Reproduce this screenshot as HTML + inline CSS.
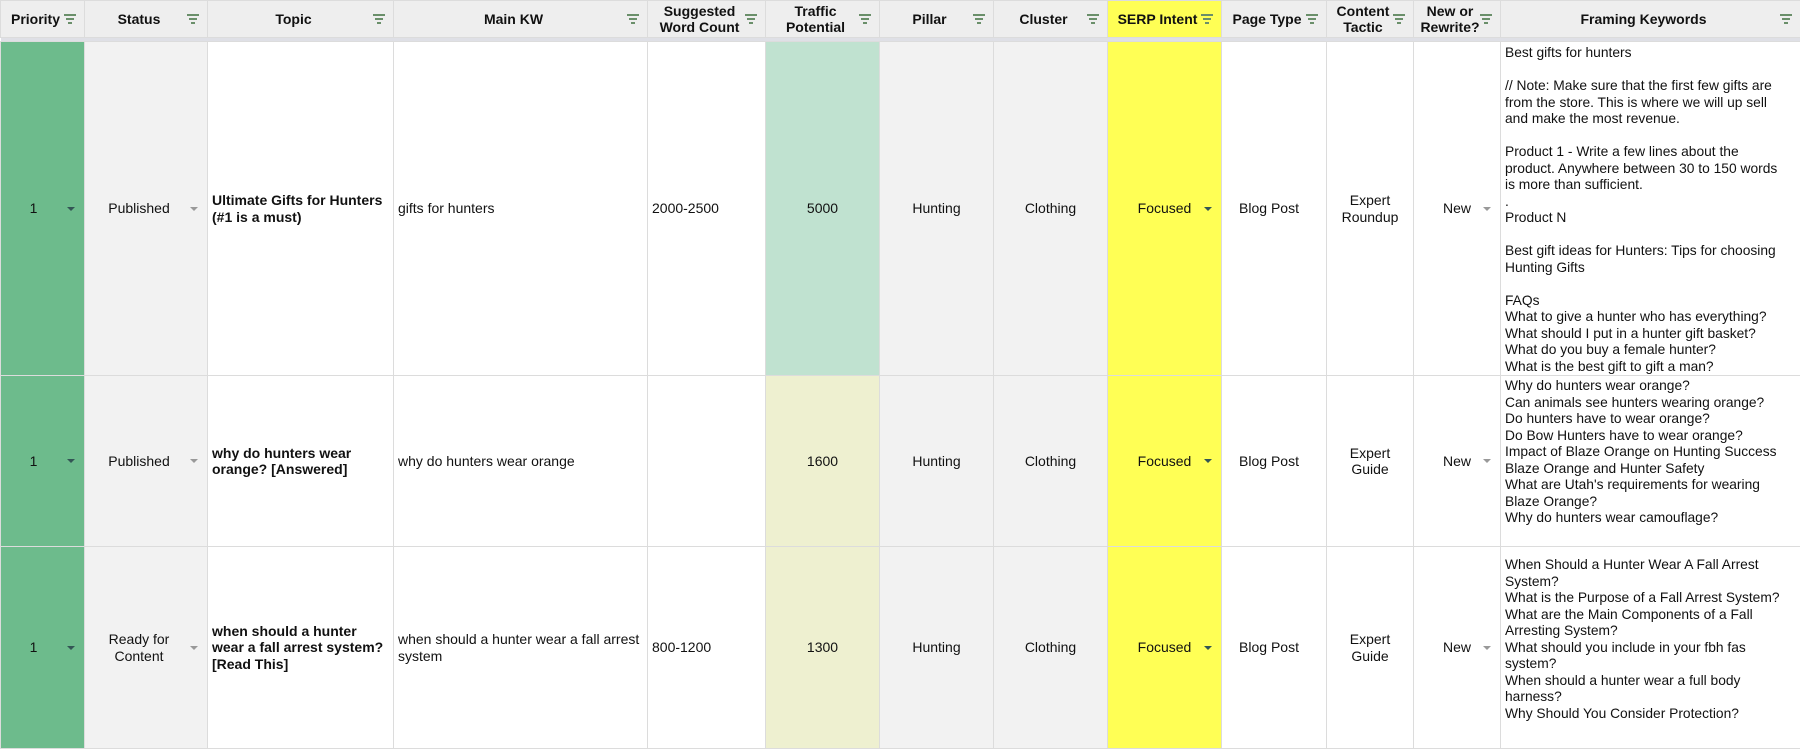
<!DOCTYPE html>
<html><head><meta charset="utf-8"><style>
*{box-sizing:border-box;margin:0;padding:0}
body{width:1800px;height:748px;overflow:hidden;background:#fff;font-family:"Liberation Sans",sans-serif;color:#111}
table{border-collapse:collapse;table-layout:fixed;width:1800px}
td,th{border:1px solid #dcdcdc;font-size:14px;vertical-align:middle;position:relative;overflow:hidden}
th{background:#eeeeee;height:37px;font-weight:bold;font-size:14px;line-height:16px;text-align:center;padding-right:14px}
th .f{position:absolute;right:8px;top:13px;width:12px;height:10px}
th .f i{display:block;height:1.5px;background:#6a8f6a;margin:0 auto 2.5px}
th .c::after{content:"";position:absolute;right:0;top:0;border-top:7px solid #111;border-left:7px solid transparent}
tr.band td{height:4px;background:#dfe0e6;border:none}
td{padding:0 4px;line-height:16.5px}
.g{background:#f2f2f2}
.ctr{text-align:center}
.b{font-weight:bold}
.fk{font-size:13.8px;vertical-align:top;padding-top:3px;white-space:nowrap}
.dd::after{content:"";position:absolute;right:9px;top:50%;margin-top:-2px;border-top:4px solid #999;border-left:4px solid transparent;border-right:4px solid transparent}
.dk::after{border-top-color:#355}
</style></head><body>
<table>
<colgroup><col style="width:84px"><col style="width:123px"><col style="width:186px"><col style="width:254px"><col style="width:118px"><col style="width:114px"><col style="width:114px"><col style="width:114px"><col style="width:114px"><col style="width:105px"><col style="width:87px"><col style="width:87px"><col style="width:300px"></colgroup>
<tr>
<th class="c">Priority<span class="f"><i style="width:12px"></i><i style="width:8px"></i><i style="width:4px"></i></span></th>
<th class="c">Status<span class="f"><i style="width:12px"></i><i style="width:8px"></i><i style="width:4px"></i></span></th>
<th class="c">Topic<span class="f"><i style="width:12px"></i><i style="width:8px"></i><i style="width:4px"></i></span></th>
<th class="c">Main KW<span class="f"><i style="width:12px"></i><i style="width:8px"></i><i style="width:4px"></i></span></th>
<th>Suggested<br>Word Count<span class="f"><i style="width:12px"></i><i style="width:8px"></i><i style="width:4px"></i></span></th>
<th>Traffic<br>Potential<span class="f"><i style="width:12px"></i><i style="width:8px"></i><i style="width:4px"></i></span></th>
<th>Pillar<span class="f"><i style="width:12px"></i><i style="width:8px"></i><i style="width:4px"></i></span></th>
<th>Cluster<span class="f"><i style="width:12px"></i><i style="width:8px"></i><i style="width:4px"></i></span></th>
<th style="background:#ffff55">SERP Intent<span class="f"><i style="width:12px"></i><i style="width:8px"></i><i style="width:4px"></i></span></th>
<th>Page Type<span class="f"><i style="width:12px"></i><i style="width:8px"></i><i style="width:4px"></i></span></th>
<th>Content<br>Tactic<span class="f"><i style="width:12px"></i><i style="width:8px"></i><i style="width:4px"></i></span></th>
<th class="c">New or<br>Rewrite?<span class="f"><i style="width:12px"></i><i style="width:8px"></i><i style="width:4px"></i></span></th>
<th class="c">Framing Keywords<span class="f"><i style="width:12px"></i><i style="width:8px"></i><i style="width:4px"></i></span></th>
</tr>
<tr class="band"><td colspan="13"></td></tr>
<tr style="height:334px">
<td class="ctr dd dk" style="background:#6dbb8c;padding-right:22px">1</td>
<td class="ctr g dd" style="padding-right:18px">Published</td>
<td class="b">Ultimate Gifts for Hunters (#1 is a must)</td>
<td>gifts for hunters</td>
<td>2000-2500</td>
<td class="ctr" style="background:#c0e2d0">5000</td>
<td class="ctr g">Hunting</td>
<td class="ctr g">Clothing</td>
<td class="ctr dd dk" style="background:#ffff55">Focused</td>
<td class="ctr" style="padding-right:14px">Blog Post</td>
<td class="ctr">Expert<br>Roundup</td>
<td class="ctr dd">New</td>
<td class="fk">Best gifts for hunters<br><br>// Note: Make sure that the first few gifts are<br>from the store. This is where we will up sell<br>and make the most revenue.<br><br>Product 1 - Write a few lines about the<br>product. Anywhere between 30 to 150 words<br>is more than sufficient.<br>.<br>Product N<br><br>Best gift ideas for Hunters: Tips for choosing<br>Hunting Gifts<br><br>FAQs<br>What to give a hunter who has everything?<br>What should I put in a hunter gift basket?<br>What do you buy a female hunter?<br>What is the best gift to gift a man?</td>
</tr>
<tr style="height:171px">
<td class="ctr dd dk" style="background:#6dbb8c;padding-right:22px">1</td>
<td class="ctr g dd" style="padding-right:18px">Published</td>
<td class="b">why do hunters wear orange? [Answered]</td>
<td>why do hunters wear orange</td>
<td></td>
<td class="ctr" style="background:#eef0d0">1600</td>
<td class="ctr g">Hunting</td>
<td class="ctr g">Clothing</td>
<td class="ctr dd dk" style="background:#ffff55">Focused</td>
<td class="ctr" style="padding-right:14px">Blog Post</td>
<td class="ctr">Expert<br>Guide</td>
<td class="ctr dd">New</td>
<td class="fk" style="padding-top:2px">Why do hunters wear orange?<br>Can animals see hunters wearing orange?<br>Do hunters have to wear orange?<br>Do Bow Hunters have to wear orange?<br>Impact of Blaze Orange on Hunting Success<br>Blaze Orange and Hunter Safety<br>What are Utah's requirements for wearing<br>Blaze Orange?<br>Why do hunters wear camouflage?</td>
</tr>
<tr style="height:202px">
<td class="ctr dd dk" style="background:#6dbb8c;padding-right:22px">1</td>
<td class="ctr g dd" style="padding-right:18px">Ready for<br>Content</td>
<td class="b">when should a hunter wear a fall arrest system? [Read This]</td>
<td>when should a hunter wear a fall arrest system</td>
<td>800-1200</td>
<td class="ctr" style="background:#eef0d0">1300</td>
<td class="ctr g">Hunting</td>
<td class="ctr g">Clothing</td>
<td class="ctr dd dk" style="background:#ffff55">Focused</td>
<td class="ctr" style="padding-right:14px">Blog Post</td>
<td class="ctr">Expert<br>Guide</td>
<td class="ctr dd">New</td>
<td class="fk" style="padding-top:10px">When Should a Hunter Wear A Fall Arrest<br>System?<br>What is the Purpose of a Fall Arrest System?<br>What are the Main Components of a Fall<br>Arresting System?<br>What should you include in your fbh fas<br>system?<br>When should a hunter wear a full body<br>harness?<br>Why Should You Consider Protection?</td>
</tr>
</table>
</body></html>
